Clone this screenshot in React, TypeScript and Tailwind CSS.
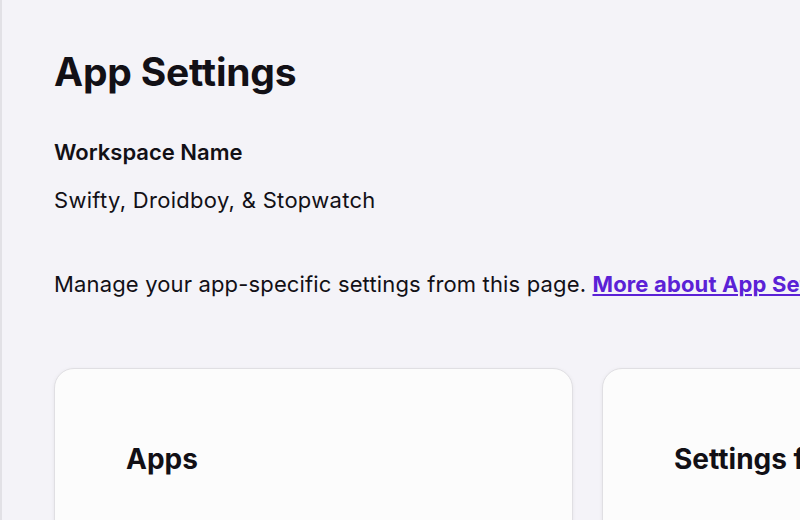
import React from "react";

export default function App() {
  return (
    <div
      className="w-[800px] h-[520px] overflow-hidden bg-[#f4f3f8] border-l-2 border-[#e2e1e6] text-[#121016]"
      style={{ fontFamily: "Inter, 'Noto Sans', sans-serif" }}
    >
      <div className="pl-[52px] pt-[48px] w-[1200px]">
        <h1 className="text-[39px] leading-[48px] font-bold tracking-[-0.2px]">App Settings</h1>
        <div className="mt-[42px] text-[22px] leading-[28px] font-semibold">Workspace Name</div>
        <div className="mt-[20px] text-[22px] leading-[28px] tracking-[0.3px]">Swifty, Droidboy, &amp; Stopwatch</div>
        <p className="mt-[56px] text-[22px] leading-[28px] tracking-[0.15px] whitespace-nowrap">
          Manage your app-specific settings from this page.{" "}
          <a className="font-bold text-[#5b21d6] underline underline-offset-2">More about App Settings</a>
        </p>
        <div className="mt-[70px] flex gap-[29px]">
          <div className="w-[519px] h-[200px] rounded-[20px] border border-[#e0dfe3] bg-[#fcfcfc] shadow-[0_1px_4px_rgba(0,0,0,0.06)] pl-[71px] pt-[72px]">
            <h2 className="text-[28px] leading-[36px] font-bold">Apps</h2>
          </div>
          <div className="w-[519px] h-[200px] rounded-[20px] border border-[#e0dfe3] bg-[#fcfcfc] shadow-[0_1px_4px_rgba(0,0,0,0.06)] pl-[71px] pt-[72px]">
            <h2 className="text-[28px] leading-[36px] font-bold whitespace-nowrap">Settings for Apps</h2>
          </div>
        </div>
      </div>
    </div>
  );
}
